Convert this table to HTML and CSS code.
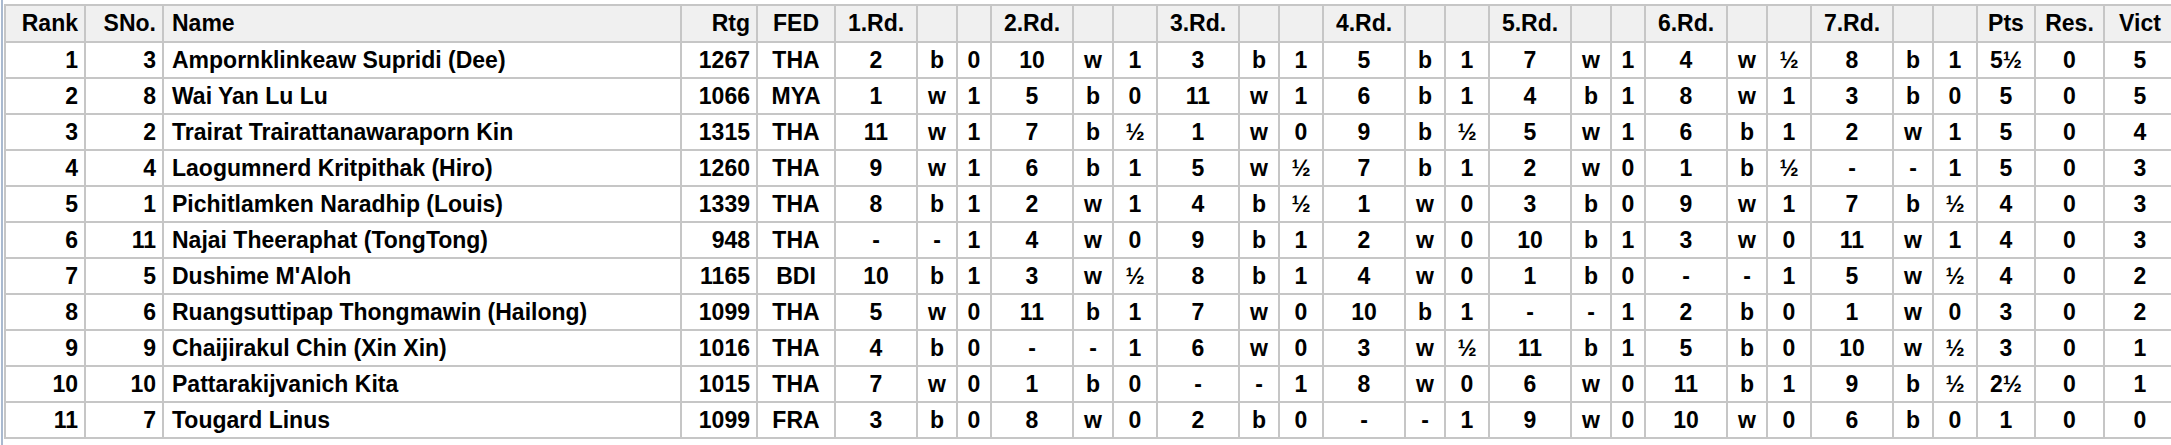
FILE: index.html
```html
<!DOCTYPE html>
<html>
<head>
<meta charset="utf-8">
<link rel="stylesheet" href="styles.css">
</head>
<body>
<div class="frame">
<table class="standings">
<colgroup>
<col class="w80"><col class="w78"><col class="w518"><col class="w76"><col class="w78">
<col class="w82"><col class="w40"><col class="w34">
<col class="w82"><col class="w40"><col class="w44">
<col class="w82"><col class="w40"><col class="w44">
<col class="w82"><col class="w40"><col class="w44">
<col class="w82"><col class="w40"><col class="w34">
<col class="w82"><col class="w40"><col class="w44">
<col class="w82"><col class="w40"><col class="w44">
<col class="w58"><col class="w69"><col class="w72">
</colgroup>
<thead>
<tr>
<th class="r">Rank</th><th class="r">SNo.</th><th class="l">Name</th><th class="r">Rtg</th><th>FED</th>
<th>1.Rd.</th><th></th><th></th>
<th>2.Rd.</th><th></th><th></th>
<th>3.Rd.</th><th></th><th></th>
<th>4.Rd.</th><th></th><th></th>
<th>5.Rd.</th><th></th><th></th>
<th>6.Rd.</th><th></th><th></th>
<th>7.Rd.</th><th></th><th></th>
<th>Pts</th><th>Res.</th><th>Vict</th>
</tr>
</thead>
<tbody>
<tr><td class="r">1</td><td class="r">3</td><td class="l">Ampornklinkeaw Supridi (Dee)</td><td class="r">1267</td><td>THA</td><td>2</td><td>b</td><td>0</td><td>10</td><td>w</td><td>1</td><td>3</td><td>b</td><td>1</td><td>5</td><td>b</td><td>1</td><td>7</td><td>w</td><td>1</td><td>4</td><td>w</td><td>½</td><td>8</td><td>b</td><td>1</td><td>5½</td><td>0</td><td>5</td></tr>
<tr><td class="r">2</td><td class="r">8</td><td class="l">Wai Yan Lu Lu</td><td class="r">1066</td><td>MYA</td><td>1</td><td>w</td><td>1</td><td>5</td><td>b</td><td>0</td><td>11</td><td>w</td><td>1</td><td>6</td><td>b</td><td>1</td><td>4</td><td>b</td><td>1</td><td>8</td><td>w</td><td>1</td><td>3</td><td>b</td><td>0</td><td>5</td><td>0</td><td>5</td></tr>
<tr><td class="r">3</td><td class="r">2</td><td class="l">Trairat Trairattanawaraporn Kin</td><td class="r">1315</td><td>THA</td><td>11</td><td>w</td><td>1</td><td>7</td><td>b</td><td>½</td><td>1</td><td>w</td><td>0</td><td>9</td><td>b</td><td>½</td><td>5</td><td>w</td><td>1</td><td>6</td><td>b</td><td>1</td><td>2</td><td>w</td><td>1</td><td>5</td><td>0</td><td>4</td></tr>
<tr><td class="r">4</td><td class="r">4</td><td class="l">Laogumnerd Kritpithak (Hiro)</td><td class="r">1260</td><td>THA</td><td>9</td><td>w</td><td>1</td><td>6</td><td>b</td><td>1</td><td>5</td><td>w</td><td>½</td><td>7</td><td>b</td><td>1</td><td>2</td><td>w</td><td>0</td><td>1</td><td>b</td><td>½</td><td>-</td><td>-</td><td>1</td><td>5</td><td>0</td><td>3</td></tr>
<tr><td class="r">5</td><td class="r">1</td><td class="l">Pichitlamken Naradhip (Louis)</td><td class="r">1339</td><td>THA</td><td>8</td><td>b</td><td>1</td><td>2</td><td>w</td><td>1</td><td>4</td><td>b</td><td>½</td><td>1</td><td>w</td><td>0</td><td>3</td><td>b</td><td>0</td><td>9</td><td>w</td><td>1</td><td>7</td><td>b</td><td>½</td><td>4</td><td>0</td><td>3</td></tr>
<tr><td class="r">6</td><td class="r">11</td><td class="l">Najai Theeraphat (TongTong)</td><td class="r">948</td><td>THA</td><td>-</td><td>-</td><td>1</td><td>4</td><td>w</td><td>0</td><td>9</td><td>b</td><td>1</td><td>2</td><td>w</td><td>0</td><td>10</td><td>b</td><td>1</td><td>3</td><td>w</td><td>0</td><td>11</td><td>w</td><td>1</td><td>4</td><td>0</td><td>3</td></tr>
<tr><td class="r">7</td><td class="r">5</td><td class="l">Dushime M'Aloh</td><td class="r">1165</td><td>BDI</td><td>10</td><td>b</td><td>1</td><td>3</td><td>w</td><td>½</td><td>8</td><td>b</td><td>1</td><td>4</td><td>w</td><td>0</td><td>1</td><td>b</td><td>0</td><td>-</td><td>-</td><td>1</td><td>5</td><td>w</td><td>½</td><td>4</td><td>0</td><td>2</td></tr>
<tr><td class="r">8</td><td class="r">6</td><td class="l">Ruangsuttipap Thongmawin (Hailong)</td><td class="r">1099</td><td>THA</td><td>5</td><td>w</td><td>0</td><td>11</td><td>b</td><td>1</td><td>7</td><td>w</td><td>0</td><td>10</td><td>b</td><td>1</td><td>-</td><td>-</td><td>1</td><td>2</td><td>b</td><td>0</td><td>1</td><td>w</td><td>0</td><td>3</td><td>0</td><td>2</td></tr>
<tr><td class="r">9</td><td class="r">9</td><td class="l">Chaijirakul Chin (Xin Xin)</td><td class="r">1016</td><td>THA</td><td>4</td><td>b</td><td>0</td><td>-</td><td>-</td><td>1</td><td>6</td><td>w</td><td>0</td><td>3</td><td>w</td><td>½</td><td>11</td><td>b</td><td>1</td><td>5</td><td>b</td><td>0</td><td>10</td><td>w</td><td>½</td><td>3</td><td>0</td><td>1</td></tr>
<tr><td class="r">10</td><td class="r">10</td><td class="l">Pattarakijvanich Kita</td><td class="r">1015</td><td>THA</td><td>7</td><td>w</td><td>0</td><td>1</td><td>b</td><td>0</td><td>-</td><td>-</td><td>1</td><td>8</td><td>w</td><td>0</td><td>6</td><td>w</td><td>0</td><td>11</td><td>b</td><td>1</td><td>9</td><td>b</td><td>½</td><td>2½</td><td>0</td><td>1</td></tr>
<tr><td class="r">11</td><td class="r">7</td><td class="l">Tougard Linus</td><td class="r">1099</td><td>FRA</td><td>3</td><td>b</td><td>0</td><td>8</td><td>w</td><td>0</td><td>2</td><td>b</td><td>0</td><td>-</td><td>-</td><td>1</td><td>9</td><td>w</td><td>0</td><td>10</td><td>w</td><td>0</td><td>6</td><td>b</td><td>0</td><td>1</td><td>0</td><td>0</td></tr>
</tbody>
</table>
</div>
</body>
</html>
```
FILE: styles.css
```css
html, body {
  margin: 0;
  padding: 0;
  overflow: hidden;
  background: #ffffff;
}

.frame {
  margin-left: 1px;
  border-left: 2px solid #a9b9cf;
  min-height: 100vh;
  padding-top: 4px;
  padding-left: 1px;
  box-sizing: border-box;
}

.standings {
  border-collapse: collapse;
  table-layout: fixed;
  width: 2171px;
  font-family: "Liberation Sans", Arial, sans-serif;
  font-weight: bold;
  font-size: 23px;
  color: #000;
}

.standings th,
.standings td {
  border: 2px solid #c6c6c6;
  padding: 0 6px;
  text-align: center;
  vertical-align: middle;
  white-space: nowrap;
  overflow: hidden;
  font-weight: bold;
}

.standings thead tr {
  height: 37px;
}

.standings th {
  background: #f0f0f0;
}

.standings tbody tr {
  height: 36px;
}

.standings .r { text-align: right; }
.standings .l { text-align: left; padding-left: 8px; }

.w80 { width: 80px; }
.w78 { width: 78px; }
.w518 { width: 518px; }
.w76 { width: 76px; }
.w82 { width: 82px; }
.w40 { width: 40px; }
.w34 { width: 34px; }
.w44 { width: 44px; }
.w58 { width: 58px; }
.w69 { width: 69px; }
.w72 { width: 72px; }
```
